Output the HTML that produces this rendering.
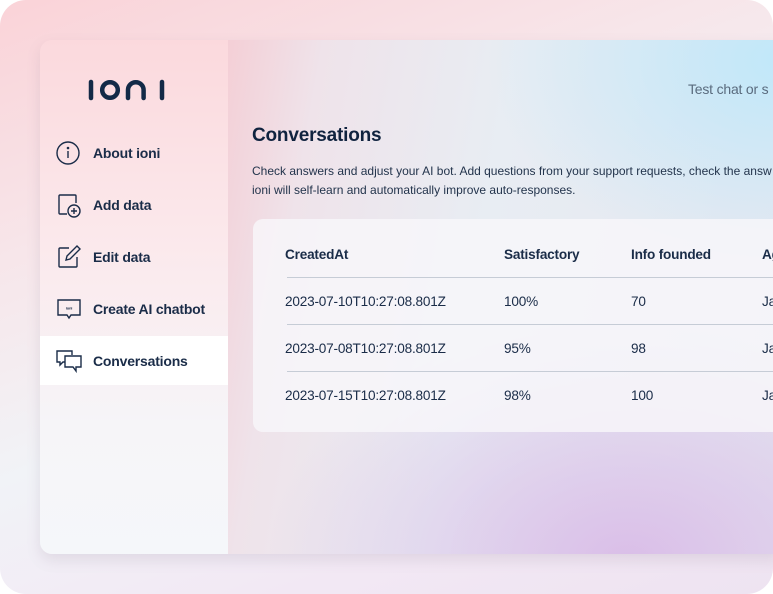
<!DOCTYPE html>
<html><head><style>
*{margin:0;padding:0;box-sizing:border-box}
body{width:773px;height:594px;background:#fff;font-family:"Liberation Sans",sans-serif;color:#10233f;position:relative;overflow:hidden}
.outer{position:absolute;left:0;top:0;width:773px;height:594px;border-radius:26px;
background:linear-gradient(160deg,#fad3d8 0%,#f7e6ea 30%,#f1f3f7 55%,#f2e8f4 80%,#eee3f1 100%)}
.panel{position:absolute;left:40px;top:40px;width:740px;height:514px;border-radius:12px 0 0 12px;overflow:hidden;box-shadow:0 6px 14px rgba(120,100,130,.15)}
.side{position:absolute;left:0;top:0;width:188px;height:514px;background:linear-gradient(180deg,#fbd9dd 0%,#fbe9ec 40%,#f6f5f8 75%,#f5f7fa 100%)}
.main{position:absolute;left:188px;top:0;right:0;height:514px;
background:
radial-gradient(ellipse 300px 200px at 560px 20px,rgba(190,232,250,.95),rgba(190,232,250,0)),
radial-gradient(ellipse 360px 240px at 400px 520px,rgba(218,190,232,1),rgba(218,190,232,0)),
linear-gradient(100deg,#f4cfd6 0%,#efe3ea 15%,#e8edf3 45%,#e4e6f0 100%)}
.logo{position:absolute;left:48px;top:38px}
.item{position:absolute;left:0;width:188px;height:49px;display:flex;align-items:center;font-size:14px;font-weight:bold;color:#1a2c48;letter-spacing:-0.2px}
.item svg{position:absolute;left:15px}
.item span{position:absolute;left:53px;top:17px}
.active{background:#fff}
h1{position:absolute;left:24px;top:85px;font-size:19px;font-weight:bold;color:#10233f;letter-spacing:-0.2px}
.desc{position:absolute;left:24px;top:122px;font-size:12px;line-height:19px;color:#23344c;white-space:nowrap}
.test{position:absolute;left:460px;top:41px;font-size:14px;color:#5a6b7e;white-space:nowrap;letter-spacing:-0.2px}
.card{position:absolute;left:25px;top:179px;width:540px;height:213px;border-radius:10px;background:rgba(248,247,250,.82)}
.r{position:absolute;left:0;font-size:13.6px;color:#1a2c48;white-space:nowrap;letter-spacing:-0.2px}
.r b{font-weight:bold}
.r span{position:absolute}
.line{position:absolute;left:34px;width:520px;height:1px;background:#c6ccd6}
</style></head><body>
<div class="outer"></div>
<div class="panel">
 <div class="side">
  <svg class="logo" width="80" height="24" viewBox="0 0 80 24" fill="none" stroke="#132a47" stroke-width="4.5" stroke-linecap="round"><line x1="3" y1="4" x2="3" y2="20"/><circle cx="22" cy="12" r="7.8"/><path d="M40 20v-8a7.8 7.8 0 0 1 15.6 0v8"/><line x1="74" y1="4" x2="74" y2="20"/></svg>
  <div class="item" style="top:88px"><svg width="26" height="26" viewBox="0 0 26 26" fill="none" stroke="#1a2c48" stroke-width="1.4"><circle cx="13" cy="13" r="11"/><line x1="13" y1="11" x2="13" y2="18"/><circle cx="13" cy="8" r=".6" fill="#1a2c48"/></svg><span>About ioni</span></div>
  <div class="item" style="top:140px"><svg width="28" height="28" viewBox="0 0 28 28" fill="none" stroke="#1a2c48" stroke-width="1.4"><path d="M12 23H5a1 1 0 0 1-1-1V5a1 1 0 0 1 1-1h15a1 1 0 0 1 1 1v7"/><circle cx="19" cy="20" r="6" fill="#fbe6e9"/><path d="M19 17v6M16 20h6"/></svg><span>Add data</span></div>
  <div class="item" style="top:192px"><svg width="28" height="28" viewBox="0 0 28 28" fill="none" stroke="#1a2c48" stroke-width="1.4"><path d="M14 5H5a1 1 0 0 0-1 1v17a1 1 0 0 0 1 1h16a1 1 0 0 0 1-1v-9"/><path d="M11 17l1-4 10-10 3 3-10 10z"/></svg><span>Edit data</span></div>
  <div class="item" style="top:244px"><svg width="28" height="28" viewBox="0 0 28 28" fill="none" stroke="#1a2c48" stroke-width="1.4"><path d="M3 5h22v15H16l-2 3-2-3H3z"/><text x="14" y="14.5" font-size="4" text-anchor="middle" fill="#1a2c48" stroke="none" font-family="Liberation Sans" font-weight="bold">ioni</text></svg><span>Create AI chatbot</span></div>
  <div class="item active" style="top:296px"><svg width="28" height="28" viewBox="0 0 28 28" fill="none" stroke="#1a2c48" stroke-width="1.4"><path d="M17 8V4H2v11h3v3l3-3h2"/><path d="M10 9h16v11h-5v4l-3-4h-8z" fill="#fff"/></svg><span>Conversations</span></div>
 </div>
 <div class="main">
  <div class="test">Test chat or s</div>
  <h1>Conversations</h1>
  <div class="desc">Check answers and adjust your AI bot. Add questions from your support requests, check the answ<br>ioni will self-learn and automatically improve auto-responses.</div>
  <div class="card">
   <div class="r" style="top:28px"><b><span style="left:32px">CreatedAt</span><span style="left:251px">Satisfactory</span><span style="left:378px">Info founded</span><span style="left:509px">Ag</span></b></div>
   <div class="line" style="top:58px"></div>
   <div class="r" style="top:75px"><span style="left:32px">2023-07-10T10:27:08.801Z</span><span style="left:251px">100%</span><span style="left:378px">70</span><span style="left:509px">Ja</span></div>
   <div class="line" style="top:105px"></div>
   <div class="r" style="top:122px"><span style="left:32px">2023-07-08T10:27:08.801Z</span><span style="left:251px">95%</span><span style="left:378px">98</span><span style="left:509px">Ja</span></div>
   <div class="line" style="top:152px"></div>
   <div class="r" style="top:169px"><span style="left:32px">2023-07-15T10:27:08.801Z</span><span style="left:251px">98%</span><span style="left:378px">100</span><span style="left:509px">Ja</span></div>
  </div>
 </div>
</div>
</body></html>
